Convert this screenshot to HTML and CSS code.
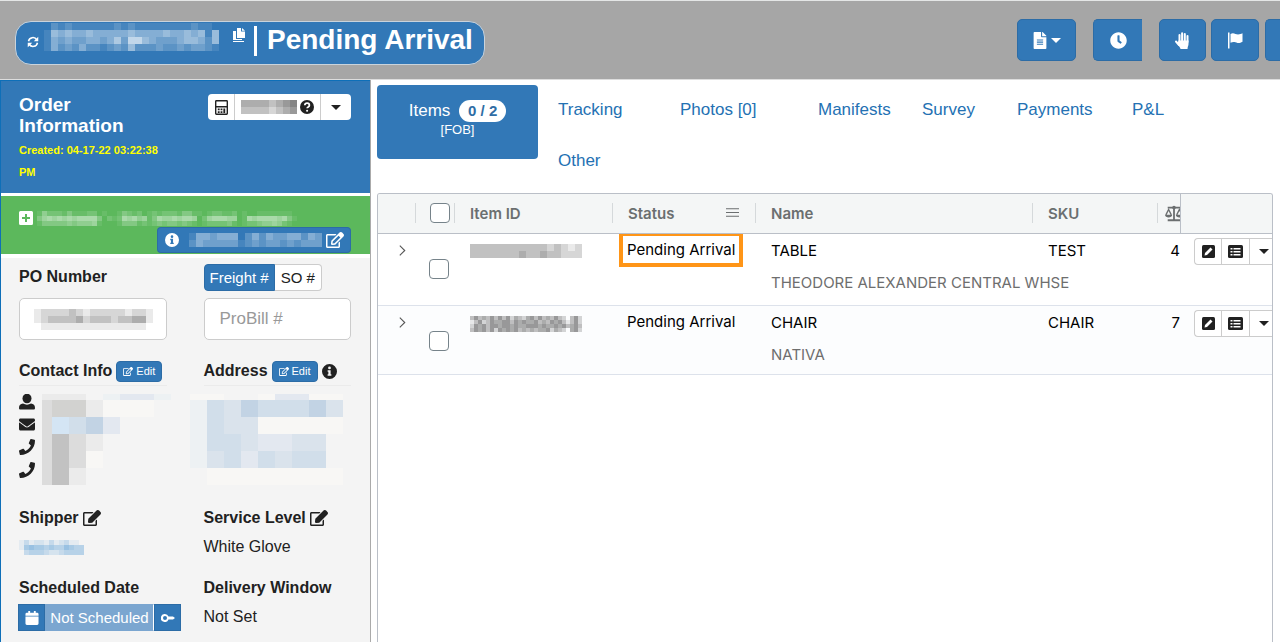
FILE: index.html
```html
<!DOCTYPE html>
<html lang="en">
<head>
    <meta charset="UTF-8">
    <meta name="viewport" content="width=device-width, initial-scale=1">
    <title>Order - Pending Arrival</title>
    <link rel="stylesheet" href="styles.css">
</head>
<body>
    <svg class="sprite" aria-hidden="true">
        <symbol id="i-sync" viewBox="0 0 16 16"><g fill="none" stroke="currentColor" stroke-width="2"><path d="M2 7a6 6 0 0 1 11-2M14 9a6 6 0 0 1-11 2"/></g><path d="M15 1v6H9zM1 15V9h6z"/></symbol>
        <symbol id="i-copy" viewBox="0 0 12 14"><path d="M4 0h4v3.500h4V10H4zM9 0l3 2.800H9zM0 3h3v8h6v1H0zM0 13h11v1H0z"/></symbol>
        <symbol id="i-file" viewBox="0 0 384 512"><path d="M224 136V0H24C10.700 0 0 10.700 0 24v464c0 13.300 10.700 24 24 24h336c13.300 0 24-10.700 24-24V160H248c-13.200 0-24-10.800-24-24zm64 236c0 6.600-5.400 12-12 12H108c-6.600 0-12-5.400-12-12v-8c0-6.600 5.400-12 12-12h168c6.600 0 12 5.400 12 12v8zm0-64c0 6.600-5.400 12-12 12H108c-6.600 0-12-5.400-12-12v-8c0-6.600 5.400-12 12-12h168c6.600 0 12 5.400 12 12v8zm0-72v8c0 6.600-5.400 12-12 12H108c-6.600 0-12-5.400-12-12v-8c0-6.600 5.400-12 12-12h168c6.600 0 12 5.400 12 12zm96-114v6H256V0h6c6 0 12 2 17 7l98 98c5 5 7 11 7 17z"/></symbol>
        <symbol id="i-clock" viewBox="0 0 512 512"><path d="M256 8C119 8 8 119 8 256s111 248 248 248 248-111 248-248S393 8 256 8zm92 313l-20 25a16 16 0 0 1-22 3l-67-50a40 40 0 0 1-15-31V112a16 16 0 0 1 16-16h32a16 16 0 0 1 16 16v144l58 43a16 16 0 0 1 2 22z"/></symbol>
        <symbol id="i-hand" viewBox="0 0 16 17"><g fill="none" stroke="currentColor" stroke-width="2" stroke-linecap="round"><path d="M5 10V3M7.600 9V1.200M10.300 9V2M13 10V4M1.500 9.500L4.500 13"/></g><path d="M4 8.500h10V12c0 2-1 2.500-1 5H6c0-1.500-1.500-2.500-3-5z"/></symbol>
        <symbol id="i-flag" viewBox="0 0 16 17"><path d="M.5.500h1.500v16H.500zM3 2c3-2 5 .500 7.500.500 2 0 3-.500 4.500-1.200v8.500c-4 2.500-6 .500-8 .200-1.500-.200-2.500 0-4 .800z"/></symbol>
        <symbol id="i-caret" viewBox="0 0 10 5"><path d="M0 0h10L5 5z"/></symbol>
        <symbol id="i-calc" viewBox="0 0 14 16"><path fill-rule="evenodd" d="M1.500 0h11A1.500 1.500 0 0 1 14 1.500v13a1.500 1.500 0 0 1-1.500 1.500h-11A1.500 1.500 0 0 1 0 14.500v-13A1.500 1.500 0 0 1 1.500 0zM1.500 1.500v5h11v-5zM1.500 8v6.500h11V8z"/><path d="M3 9h2v2H3zM6 9h2v2H6zM9 9h2v5H9zM3 12h2v2H3zM6 12h2v2H6z"/></symbol>
        <symbol id="i-question" viewBox="0 0 16 16"><circle cx="8" cy="8" r="8"/><path d="M5.500 6c.300-3.200 5.300-3 5.200.200 0 1.800-2.500 1.700-2.500 3.300" fill="none" stroke="#fff" stroke-width="2"/><circle cx="8.100" cy="12.300" r="1.200" fill="#fff"/></symbol>
        <symbol id="i-info" viewBox="0 0 16 16"><path fill-rule="evenodd" d="M8 0a8 8 0 1 1 0 16A8 8 0 0 1 8 0zM8 2.700a1.500 1.500 0 1 0 0 3 1.500 1.500 0 0 0 0-3zM6 6.700v1.500h.800v2.800H6v1.500h4V11h-.800V6.700z"/></symbol>
        <symbol id="i-plus" viewBox="0 0 14 14"><path fill-rule="evenodd" d="M1.500 0h11A1.500 1.500 0 0 1 14 1.500v11a1.500 1.500 0 0 1-1.500 1.500h-11A1.500 1.500 0 0 1 0 12.500v-11A1.500 1.500 0 0 1 1.500 0zM6 3v3H3v2h3v3h2V8h3V6H8V3z"/></symbol>
        <symbol id="i-edit" viewBox="0 0 576 512"><path d="M402 345l32-32c5-5 14-2 14 6v145c0 27-21 48-48 48H48c-27 0-48-21-48-48V112c0-27 21-48 48-48h274c7 0 10 9 5 14l-32 32c-1 1-3 2-5 2H48v352h352V351c0-2 1-4 2-6z"/><path d="M559 143L296 406l-90 10c-26 3-49-19-46-46l10-90L433 17c23-23 60-23 83 0l43 43c23 23 23 60 0 83z"/></symbol>
        <symbol id="i-edit-line" viewBox="0 0 576 512"><path d="M402 345l32-32c5-5 14-2 14 6v145c0 27-21 48-48 48H48c-27 0-48-21-48-48V112c0-27 21-48 48-48h274c7 0 10 9 5 14l-32 32c-1 1-3 2-5 2H48v352h352V351c0-2 1-4 2-6zm157-202L296 406l-90 10c-26 3-49-19-46-46l10-90L433 17c23-23 60-23 83 0l43 43c23 23 23 60 0 83zm-99 31l-58-58-186 186-7 65 65-7 186-186z"/></symbol>
        <symbol id="i-user" viewBox="0 0 16 16"><ellipse cx="8" cy="4.500" rx="4.500" ry="4.800"/><path d="M4 9.500c2.500 1.500 5.500 1.500 8 0 2.500.500 4 1.500 4 4.500 0 1-.600 1.500-1.500 1.500h-13C.600 15.500 0 15 0 14c0-3 1.500-4 4-4.500z"/></symbol>
        <symbol id="i-mail" viewBox="0 64 512 384"><path d="M502 191c4-3 10 0 10 5v204c0 27-21 48-48 48H48c-27 0-48-21-48-48V196c0-5 6-8 10-5 22 17 52 39 154 113 21 16 57 48 92 48 36 0 72-33 92-48 102-74 132-96 154-113zM256 320c23 0 57-29 73-41 133-97 143-105 174-129 6-5 9-12 9-19v-19c0-27-21-48-48-48H48c-27 0-48 21-48 48v19c0 7 3 14 9 19 31 24 41 32 174 129 16 12 50 41 73 41z"/></symbol>
        <symbol id="i-phone" viewBox="0 0 512 512"><path d="M493 25L389 1c-11-3-23 3-27 13l-48 112c-4 10-2 22 7 28l60 50c-36 77-99 140-177 177l-50-61c-6-8-18-11-28-7L14 361C4 366-2 378 1 389l24 104c2 11 12 19 23 19 256 0 464-207 464-464 0-11-8-21-19-23z"/></symbol>
        <symbol id="i-calendar" viewBox="0 0 14 15"><path d="M3 0h2v2h4V0h2v2h1.500A1.500 1.500 0 0 1 14 3.500V5H0V3.500A1.500 1.500 0 0 1 1.500 2H3zM0 6h14v7.500a1.500 1.500 0 0 1-1.500 1.500h-11A1.500 1.500 0 0 1 0 13.500z"/></symbol>
        <symbol id="i-key" viewBox="0 0 14 8"><path fill-rule="evenodd" d="M4 0a4 4 0 0 1 3.500 2.500H12L14 4l-2 1.500H7.500A4 4 0 1 1 4 0zm0 2a2 2 0 1 0 0 4 2 2 0 0 0 0-4z"/></symbol>
        <symbol id="i-menu" viewBox="0 0 14 10"><path d="M0 0h14v1H0zM0 4h14v1H0zM0 8h14v1H0z"/></symbol>
        <symbol id="i-chevron" viewBox="0 0 6 10"><path d="M1 0.500L5.500 5 1 9.500" fill="none" stroke="currentColor" stroke-width="1"/></symbol>
        <symbol id="i-scale" viewBox="0 0 20 17"><g fill="none" stroke="currentColor" stroke-width="2"><path d="M3 2h14M10 1v14M3 16h14"/><path d="M1 10l3-6 3 6M13 10l3-6 3 6" stroke-width="1.500"/></g><circle cx="10" cy="2" r="2"/><path d="M0 10h8c0 4-8 4-8 0zM12 10h8c0 4-8 4-8 0z"/></symbol>
        <symbol id="i-pen" viewBox="0 0 13 13"><rect width="13" height="13" rx="1.500"/><path d="M2.500 10.500L3 8l5.500-5.500 2 2L5 10z" fill="#fff"/></symbol>
        <symbol id="i-list" viewBox="0 0 15 13"><rect width="15" height="13" rx="1.500"/><path d="M2.500 3h2v1.500h-2zM5.500 3h7v1.500h-7zM2.500 6h2v1.500h-2zM5.500 6h7v1.500h-7zM2.500 9h2v1.500h-2zM5.500 9h7v1.500h-7z" fill="#fff"/></symbol>
    </svg>

    <header class="topbar">
        <h1 class="order-pill">
            <svg class="icon-sync"><use href="#i-sync"/></svg>
            <span class="mosaic" data-cell="7" data-rows="0212111111212111111112110,1545445444445444454454515,1434334434637754333455425,1423242212325222322323321"></span>
            <svg class="icon-copy"><use href="#i-copy"/></svg>
            <span class="bar"></span>
            <span>Pending Arrival</span>
        </h1>
        <div class="toolbar">
            <button class="tool tool-file" aria-label="Documents"><svg class="icon-file"><use href="#i-file"/></svg><svg class="caret"><use href="#i-caret"/></svg></button>
            <button class="tool tool-clock" aria-label="History"><svg class="icon-17"><use href="#i-clock"/></svg></button>
            <button class="tool" aria-label="Hold"><svg class="icon-17"><use href="#i-hand"/></svg></button>
            <button class="tool tool-flag" aria-label="Flag"><svg class="icon-17"><use href="#i-flag"/></svg></button>
            <button class="tool tool-cut" aria-label="More"></button>
        </div>
    </header>

    <div class="page">
        <aside class="sidebar">
            <div class="side-head">
                <div class="side-title">
                    <h2>Order Information</h2>
                    <p>Created: 04-17-22 03:22:38 PM</p>
                </div>
                <div class="btn-group">
                    <button class="w-27" aria-label="Calculator"><svg class="icon-calc"><use href="#i-calc"/></svg></button>
                    <button class="w-86" aria-label="Price"><span class="mosaic dark" data-cell="7" data-rows="44443456,33332345"></span><svg class="icon-14"><use href="#i-question"/></svg></button>
                    <button class="w-30" aria-label="Price options"><svg class="caret"><use href="#i-caret"/></svg></button>
                </div>
            </div>

            <div class="side-route">
                <div class="route-name">
                    <svg class="icon-14"><use href="#i-plus"/></svg>
                    <span class="mosaic" data-cell="5" data-rows="1422213111220100132120121222133110122112010011111110,3565656566663021265645136556566502566655016566665631,1333334344451000133312123233232101222231012234454210"></span>
                </div>
                <div class="route-tag">
                    <button class="w-29" aria-label="Route info"><svg class="icon-14"><use href="#i-info"/></svg></button>
                    <button class="tag-main" aria-label="Edit route"><span class="mosaic" data-cell="7" data-rows="1443444024243344243,2433333123233232333"></span><svg class="icon-edit"><use href="#i-edit-line"/></svg></button>
                </div>
            </div>

            <div class="side-body">
                <section>
                    <label class="side-label" for="po">PO Number</label>
                    <div class="field">
                        <input type="text" id="po">
                        <span class="mosaic dark" data-cell="7" data-rows="12222321222221221,12333342333233441,01111111111111110"></span>
                    </div>
                </section>
                <section>
                    <div class="side-label">
                        <div class="switch">
                            <button class="active">Freight #</button>
                            <button>SO #</button>
                        </div>
                    </div>
                    <div class="field"><input type="text" placeholder="ProBill #" aria-label="ProBill #"></div>
                </section>
                <section class="tall">
                    <h3 class="side-label">Contact Info <button class="edit-btn"><svg><use href="#i-edit-line"/></svg>Edit</button></h3>
                    <div class="contact">
                        <div class="contact-icons">
                            <svg><use href="#i-user"/></svg>
                            <svg class="mail"><use href="#i-mail"/></svg>
                            <svg><use href="#i-phone"/></svg>
                            <svg><use href="#i-phone"/></svg>
                        </div>
                        <span class="mosaic" data-cell="17" data-left="7" data-top="11" data-rows="jjj.edde.,ihhjfff..,ikbad....,igij.....,igif.....,igj......"></span>
                    </div>
                </section>
                <section class="tall">
                    <h3 class="side-label">Address <button class="edit-btn"><svg><use href="#i-edit-line"/></svg>Edit</button> <svg class="icon-info"><use href="#i-info"/></svg></h3>
                    <div class="address">
                        <span class="mosaic" data-cell="17" data-top="11" data-rows="ff..fddff,ebcabbbac,ebccfffff,ebbcddcc.,ecbdbcbb.,.ffffffff"></span>
                    </div>
                </section>
                <section>
                    <h3 class="side-label">Shipper <svg class="icon-edit"><use href="#i-edit"/></svg></h3>
                    <a class="side-value" href="#"><span class="mosaic shipper" data-cell="5" data-rows="1312213123110,1565545446544,0344432234444"></span></a>
                </section>
                <section>
                    <h3 class="side-label">Service Level <svg class="icon-edit"><use href="#i-edit"/></svg></h3>
                    <p class="side-value">White Glove</p>
                </section>
                <section>
                    <h3 class="side-label">Scheduled Date</h3>
                    <div class="schedule">
                        <button aria-label="Calendar"><svg class="icon-14"><use href="#i-calendar"/></svg></button>
                        <button class="muted">Not Scheduled</button>
                        <button aria-label="Unlock"><svg class="icon-key"><use href="#i-key"/></svg></button>
                    </div>
                </section>
                <section>
                    <h3 class="side-label">Delivery Window</h3>
                    <p class="side-value">Not Set</p>
                </section>
            </div>
        </aside>

        <main class="content">
            <nav class="tabs">
                <a class="tab-items" href="#"><span>Items <span class="badge">0 / 2</span></span><small>[FOB]</small></a>
                <div class="tab-links">
                    <a href="#">Tracking</a>
                    <a href="#">Photos [0]</a>
                    <a href="#">Manifests</a>
                    <a href="#">Survey</a>
                    <a href="#">Payments</a>
                    <a href="#">P&amp;L</a>
                    <a href="#">Other</a>
                </div>
            </nav>

            <div class="grid">
                <table>
                    <thead>
                        <tr>
                            <th class="c-expand"></th>
                            <th class="c-check"><input type="checkbox" aria-label="Select all"></th>
                            <th class="c-id">Item ID</th>
                            <th class="c-status"><div class="th-flex">Status <svg><use href="#i-menu"/></svg></div></th>
                            <th>Name</th>
                            <th class="c-sku">SKU</th>
                            <th class="c-weight"><svg><use href="#i-scale"/></svg></th>
                            <th class="c-actions"></th>
                        </tr>
                    </thead>
                    <tbody>
                        <tr>
                            <td class="c-expand"><svg><use href="#i-chevron"/></svg></td>
                            <td class="c-check"><input type="checkbox" aria-label="Select TABLE"></td>
                            <td><span class="mosaic dark" data-cell="7" data-rows="3333333333323212,3333333433433222"></span></td>
                            <td class="c-status"><span class="highlight">Pending Arrival</span></td>
                            <td>TABLE<div class="vendor">THEODORE ALEXANDER CENTRAL WHSE</div></td>
                            <td>TEST</td>
                            <td class="c-weight">4</td>
                            <td class="c-actions">
                                <div class="row-actions">
                                    <button aria-label="Edit item"><svg class="icon-13"><use href="#i-pen"/></svg></button>
                                    <button aria-label="Item details"><svg class="icon-list"><use href="#i-list"/></svg></button>
                                    <button aria-label="More"><svg class="caret"><use href="#i-caret"/></svg></button>
                                </div>
                            </td>
                        </tr>
                        <tr>
                            <td class="c-expand"><svg><use href="#i-chevron"/></svg></td>
                            <td class="c-check"><input type="checkbox" aria-label="Select CHAIR"></td>
                            <td><span class="mosaic dark" data-cell="4" data-rows="3534353535243245353435320352,1352354455354544534354531352,2545355455454455545445453453,3545352545453434344524320452"></span></td>
                            <td class="c-status">Pending Arrival</td>
                            <td>CHAIR<div class="vendor">NATIVA</div></td>
                            <td>CHAIR</td>
                            <td class="c-weight">7</td>
                            <td class="c-actions">
                                <div class="row-actions">
                                    <button aria-label="Edit item"><svg class="icon-13"><use href="#i-pen"/></svg></button>
                                    <button aria-label="Item details"><svg class="icon-list"><use href="#i-list"/></svg></button>
                                    <button aria-label="More"><svg class="caret"><use href="#i-caret"/></svg></button>
                                </div>
                            </td>
                        </tr>
                    </tbody>
                </table>
            </div>
        </main>
    </div>

    <script src="script.js"></script>
</body>
</html>
```
FILE: styles.css
```css
* { box-sizing: border-box; }
body {
    margin: 0;
    min-height: 100vh;
    display: flex;
    flex-direction: column;
    overflow-x: hidden;
    font-family: "Liberation Sans", Arial, sans-serif;
    font-size: 16px;
    color: #212121;
    background: #fff;
}
h1, h2, h3, p { margin: 0; }
a { color: #2471b3; text-decoration: none; }
button { font: inherit; color: inherit; padding: 0; cursor: pointer; }
svg { fill: currentColor; flex: none; }
.sprite { display: none; }
.mosaic { display: block; flex: none; }
.mosaic svg { display: block; }
.dark { color: #333; }
.caret { width: 10px; height: 5px; }
.icon-13 { width: 13px; height: 13px; }
.icon-14 { width: 14px; height: 14px; }
.icon-17 { width: 17px; height: 17px; }
.icon-edit { width: 18px; height: 16px; }
.icon-key { width: 14px; height: 8px; }

/* top bar */
.topbar {
    display: flex;
    justify-content: space-between;
    align-items: flex-start;
    height: 80px;
    padding: 18px 0 0 15px;
    background: #a6a6a6;
    border-top: 1px solid #e4e6e6;
    border-bottom: 1px solid #ddd;
    overflow: hidden;
}
.order-pill {
    display: flex;
    align-items: flex-start;
    height: 44px;
    margin-top: 2px;
    padding: 1px 11px 0;
    border: 1px solid #c9d3dc;
    border-radius: 16px;
    background: #3278b7;
    color: #fff;
    font-size: 28px;
    line-height: 34px;
    white-space: nowrap;
}
.icon-sync { width: 12px; height: 12px; margin: 13px 5px 0 0; }
.icon-copy { width: 12px; height: 14px; margin: 5px 9px 0 14px; }
.bar { width: 3px; height: 30px; margin: 3px 10px 0 0; background: #fff; }
.toolbar { display: flex; gap: 6px; }
.tool {
    display: flex;
    align-items: center;
    justify-content: center;
    width: 47px;
    height: 42px;
    border: 1px solid #2c6ca6;
    border-radius: 5px;
    background: #3278b7;
    color: #fff;
}
.tool-file { width: 59px; gap: 4px; margin-right: 11px; }
.tool-clock { width: 49px; margin-right: 11px; border-right: 0; border-radius: 5px 0 0 5px; }
.tool-flag { width: 48px; margin-left: -1px; }
.tool-cut { width: 15px; border-right: 0; border-radius: 5px 0 0 5px; }
.icon-file { width: 14px; height: 17px; }

.page { display: flex; flex: 1; }

/* sidebar */
.sidebar {
    flex: none;
    width: 371px;
    border-left: 1px solid #0e6fb8;
    border-right: 1px solid #aaa;
    background: #f4f4f4;
}
.side-head {
    display: flex;
    justify-content: space-between;
    align-items: flex-start;
    height: 113px;
    padding: 13px 19px 0 18px;
    border-top: 1px solid #0e6fb8;
    background: #3278b7;
    color: #fff;
}
.side-title { width: 145px; }
.side-title h2 { width: 120px; font-size: 19px; line-height: 21px; }
.side-title p { margin-top: 3px; font-size: 11px; font-weight: bold; line-height: 22px; color: #ff0; }
.btn-group { display: flex; }
.btn-group button {
    display: flex;
    align-items: center;
    justify-content: center;
    height: 26px;
    border: 0;
    border-right: 1px solid #ccc;
    background: #fff;
    color: #212121;
}
.btn-group button:first-child { border-radius: 4px 0 0 4px; }
.btn-group button:last-child { border: 0; border-radius: 0 4px 4px 0; }
.w-27 { width: 27px; }
.w-86 { width: 86px; gap: 3px; }
.w-30 { width: 30px; }
.icon-calc { width: 13px; height: 15px; }
.side-route {
    height: 65px;
    padding: 13px 19px 0 18px;
    border-top: 3px solid #fff;
    border-bottom: 4px solid #fff;
    background: #5cb85c;
    color: #fff;
}
.route-name { display: flex; align-items: center; gap: 4px; height: 18px; }
.route-name .mosaic { opacity: 0.8; }
.route-tag { display: flex; justify-content: flex-end; }
.route-tag button {
    display: flex;
    align-items: center;
    justify-content: center;
    height: 26px;
    border: 1px solid #2c6ca6;
    background: #3278b7;
    color: #fff;
}
.route-tag .w-29 { width: 29px; border-right: 0; border-radius: 4px 0 0 4px; }
.route-tag .tag-main { gap: 4px; padding: 0 6px 0 3px; border-left: 0; border-radius: 0 4px 4px 0; }

.side-body {
    display: grid;
    grid-template-columns: 1fr 1fr;
    grid-template-rows: 99px 147px 70px 70px;
    column-gap: 37px;
    padding: 0 19px 0 18px;
}
.side-body section { min-width: 0; }
.side-label {
    display: flex;
    align-items: center;
    gap: 4px;
    height: 28px;
    font-size: 16px;
    font-weight: bold;
    white-space: nowrap;
}
.side-body section:nth-child(-n+2) .side-label { margin: 5px 0 7px; }
.side-value { display: flex; align-items: center; height: 30px; }
.field { position: relative; }
.field input {
    display: block;
    width: 100%;
    height: 42px;
    padding: 0 15px;
    border: 1px solid #ccc;
    border-radius: 5px;
    background: #fff;
    font: inherit;
    font-size: 17px;
}
.field input::placeholder { color: #999; opacity: 1; }
.field .mosaic { position: absolute; left: 15px; top: 11px; }
.switch { display: flex; }
.switch button {
    height: 27px;
    padding: 0 6px;
    border: 1px solid #ccc;
    border-left: 0;
    border-radius: 0 4px 4px 0;
    background: #fff;
    font-size: 15px;
    font-weight: normal;
}
.switch .active { padding: 0 5px; border: 1px solid #2c6ca6; border-radius: 4px 0 0 4px; background: #3278b7; color: #fff; }
.edit-btn {
    display: flex;
    align-items: center;
    gap: 3px;
    height: 21px;
    padding: 0 6px;
    border: 1px solid #2c6ca6;
    border-radius: 4px;
    background: #3278b7;
    color: #fff;
    font-size: 11px;
    font-weight: normal;
}
.edit-btn svg { width: 10px; height: 9px; }
.icon-info { width: 15px; height: 15px; }
.contact { display: flex; gap: 7px; padding-top: 8px; border-top: 1px solid #ebebeb; }
.contact-icons { display: flex; flex-direction: column; gap: 7px; }
.contact-icons svg { width: 16px; height: 16px; }
.contact-icons .mail { height: 13px; margin: 1px 0; }
.address { padding-top: 8px; border-top: 1px solid #ebebeb; }
.address .mosaic { margin-left: -14px; }
.shipper { color: #5c9fd6; }
.schedule { display: flex; margin: 2px 0 0 -1px; }
.schedule button {
    display: flex;
    align-items: center;
    justify-content: center;
    flex: none;
    width: 27px;
    height: 27px;
    border: 1px solid #2c6ca6;
    background: #3278b7;
    color: #fff;
    font-size: 15px;
}
.schedule .muted { width: 109px; background: #7ba6d0; border-color: #7ba6d0; border-right-color: #fff; }

/* main area */
.content {
    display: flex;
    flex: 1;
    flex-direction: column;
    min-width: 0;
    padding: 5px 7px 0 6px;
}
.tabs { display: flex; height: 108px; }
.tab-items {
    display: flex;
    flex-direction: column;
    align-items: center;
    width: 161px;
    height: 74px;
    padding-top: 15px;
    border-radius: 4px;
    background: #3278b7;
    color: #fff;
    font-size: 17px;
    line-height: 22px;
}
.tab-items small { font-size: 13px; line-height: 15px; }
.badge {
    display: inline-block;
    margin-left: 4px;
    padding: 0 9px;
    border-radius: 11px;
    background: #fff;
    color: #2f6da5;
    font-size: 15px;
    font-weight: bold;
}
.tab-links {
    display: grid;
    grid-template-columns: 122px 138px 104px 95px 115px auto;
    grid-auto-rows: 51px;
    margin-left: 20px;
    font-size: 17px;
    line-height: 50px;
    white-space: nowrap;
}
.grid {
    flex: 1;
    border: 1px solid #babfc7;
    border-bottom: 0;
    border-radius: 3px 3px 0 0;
    overflow: hidden;
}
.grid table {
    width: 100%;
    table-layout: fixed;
    border-collapse: separate;
    border-spacing: 0;
    font-family: Inter, sans-serif;
    font-size: 15px;
    color: #000;
}
.grid th {
    position: relative;
    height: 40px;
    padding: 0 15px 1px;
    border-bottom: 1px solid #babfc7;
    background: #f4f6f6;
    color: #6b6f70;
    font-weight: 600;
    text-align: left;
}
/* short separators between the column heads */
.grid th:not(:nth-last-child(-n+2))::after {
    content: "";
    position: absolute;
    right: 0;
    top: 9px;
    width: 1px;
    height: 20px;
    background: #d5d9db;
}
.grid td {
    height: 69px;
    padding: 1px 15px 0;
    border-bottom: 1px solid #dde2eb;
    line-height: 32px;
    vertical-align: top;
}
.grid tbody tr:first-child td { height: 72px; }
.grid tbody tr:nth-child(2) td { background: #fcfdfe; }
.grid td > .mosaic { padding-top: 9px; }
.grid .c-expand { width: 38px; padding-left: 20px; padding-right: 0; }
.c-expand svg { width: 8px; height: 11px; color: #555; }
.grid .c-check { width: 39px; padding-left: 14px; padding-right: 0; }
.c-check input {
    appearance: none;
    display: block;
    width: 20px;
    height: 20px;
    margin: 0;
    border: 1px solid #76838a;
    border-radius: 4px;
    background: #fff;
}
td.c-check input { margin: 24px 0 0 -1px; }
.c-id { width: 158px; }
.c-status { width: 143px; }
.grid td.c-status { padding: 0 14px; white-space: nowrap; }
.th-flex { display: flex; align-items: center; justify-content: space-between; }
.th-flex svg { width: 13px; height: 10px; margin-right: 2px; }
.c-sku { width: 125px; }
.grid .c-weight { width: 22px; padding: 0 0 0 7px; overflow: hidden; }
.grid td.c-weight { padding: 1px 0 0; text-align: right; }
.c-weight svg { display: block; width: 18px; height: 17px; }
.grid .c-actions { width: 92px; padding: 0; overflow: hidden; }
.grid th.c-actions { border-left: 1px solid #babfc7; }
.vendor { color: #6e6e6e; white-space: nowrap; }
.highlight { outline: 4px solid #ff9517; outline-offset: 4px; }
.row-actions { display: flex; margin: 4px 0 0 14px; }
.row-actions button {
    display: flex;
    align-items: center;
    justify-content: center;
    flex: none;
    width: 28px;
    height: 27px;
    border: 1px solid #ccc;
    border-right: 0;
    background: #fff;
    color: #212121;
}
.row-actions button:first-child { width: 27px; border-radius: 4px 0 0 4px; }
.row-actions .icon-list { width: 15px; height: 13px; }
```
FILE: script.js
```js
// masked values: digits are shades of the text colour, letters come from this list
const tones = {
    a: '#c2d3e4', b: '#d1deea', c: '#dae3ec', d: '#e3e8f0', e: '#edf1f3', f: '#f8f7f5',
    g: '#c2c2c2', h: '#d2d2d0', i: '#dcdcdc', j: '#ebebeb', k: '#d4e5f4'
};

document.querySelectorAll('.mosaic').forEach(el => {
    const cell = Number(el.dataset.cell);
    const left = Number(el.dataset.left || 0);
    const top = Number(el.dataset.top || 0);
    const rows = el.dataset.rows.split(',');
    const w = rows[0].length * cell - left;
    const h = rows.length * cell - top;
    let out = '';
    rows.forEach((row, y) => {
        [...row].forEach((ch, x) => {
            if (ch === '.' || ch === '0') return;
            const fill = tones[ch] ? `fill="${tones[ch]}"` : `fill-opacity="${ch / 10}"`;
            out += `<rect x="${x * cell}" y="${y * cell}" width="${cell}" height="${cell}" ${fill}/>`;
        });
    });
    el.innerHTML = `<svg width="${w}" height="${h}" viewBox="${left} ${top} ${w} ${h}" shape-rendering="crispEdges">${out}</svg>`;
});
```
